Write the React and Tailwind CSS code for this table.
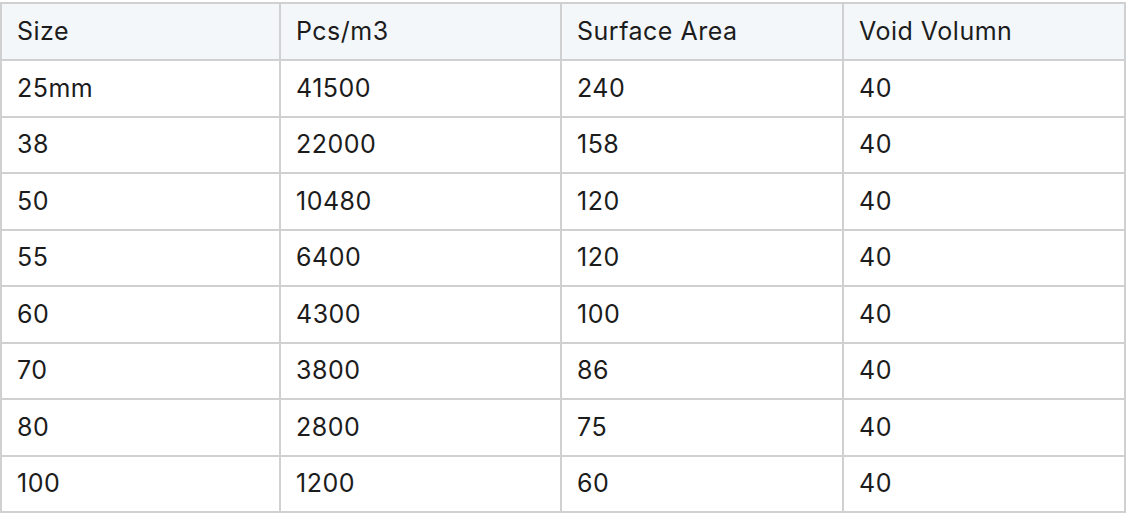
const rows = [
  ["25mm", "41500", "240", "40"],
  ["38", "22000", "158", "40"],
  ["50", "10480", "120", "40"],
  ["55", "6400", "120", "40"],
  ["60", "4300", "100", "40"],
  ["70", "3800", "86", "40"],
  ["80", "2800", "75", "40"],
  ["100", "1200", "60", "40"],
];

const head = ["Size", "Pcs/m3", "Surface Area", "Void Volumn"];

export default function App() {
  return (
    <div className="bg-white w-[1126px] h-[514px] pt-[2px]" style={{ fontFamily: "Inter, 'Noto Sans', sans-serif" }}>
      <table className="w-[1124px] table-fixed border-collapse text-[25px] tracking-[0.02em] text-[#1c1c1c]">
        <colgroup>
          <col className="w-[279px]" />
          <col className="w-[281px]" />
          <col className="w-[282px]" />
          <col className="w-[282px]" />
        </colgroup>
        <thead>
          <tr className="h-[57px] bg-[#f3f7fa]">
            {head.map((h, i) => (
              <th key={i} className="border-2 border-[#d0d0d0] pl-[15px] pr-2 text-left font-normal">
                {h}
              </th>
            ))}
          </tr>
        </thead>
        <tbody>
          {rows.map((r, i) => (
            <tr key={i} className="h-[56.5px]">
              {r.map((c, j) => (
                <td key={j} className="border-2 border-[#d0d0d0] pl-[15px] pr-2">
                  {c}
                </td>
              ))}
            </tr>
          ))}
        </tbody>
      </table>
    </div>
  );
}
